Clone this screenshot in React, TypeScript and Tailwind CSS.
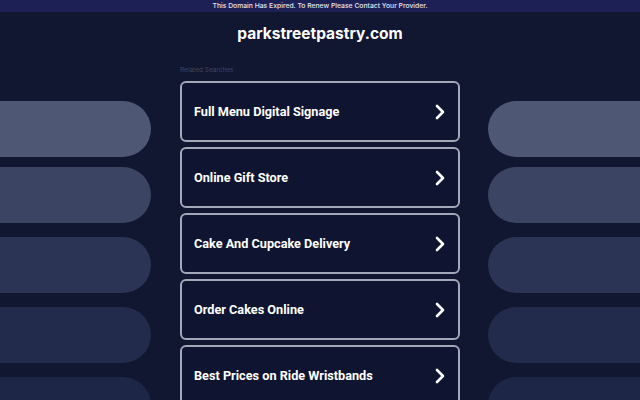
import React from "react";

const items = [
  "Full Menu Digital Signage",
  "Online Gift Store",
  "Cake And Cupcake Delivery",
  "Order Cakes Online",
  "Best Prices on Ride Wristbands",
];

const pills = [
  { c: "bg-[#4e5875]", mt: "mt-0", h: "h-[56px]" },
  { c: "bg-[#3b4462]", mt: "mt-[10px]", h: "h-[56px]" },
  { c: "bg-[#2c3455]", mt: "mt-[14px]", h: "h-[56px]" },
  { c: "bg-[#232b4c]", mt: "mt-[14px]", h: "h-[56px]" },
  { c: "bg-[#1e2647]", mt: "mt-[14px]", h: "h-[56px]" },
];

function Chevron() {
  return (
    <svg width="12" height="16" viewBox="0 0 12 16" fill="none">
      <path d="M3 2l6 6-6 6" stroke="white" strokeWidth="2.6" strokeLinecap="round" strokeLinejoin="round" />
    </svg>
  );
}

export default function App() {
  return (
    <div className="w-[640px] h-[400px] overflow-hidden bg-[#111631] flex flex-col" style={{ fontFamily: "Inter, 'Liberation Sans', sans-serif" }}>
      <div className="h-[12px] shrink-0 bg-[#1d2055] flex items-center justify-center text-[6.8px] font-medium text-[#e5e7f0] leading-none">
        This Domain Has Expired. To Renew Please Contact Your Provider.
      </div>
      <div className="mt-[13px] shrink-0 text-center text-white font-bold text-[15.5px] leading-[18px]">
        parkstreetpastry.com
      </div>
      <div className="flex mt-[23px]">
        <div className="w-[180px] shrink-0 flex flex-col pt-[35px]">
          {pills.map((p, i) => (
            <div key={i} className={`w-[151px] ${p.h} ${p.mt} ${p.c} rounded-r-full shrink-0`} />
          ))}
        </div>
        <div className="w-[280px] shrink-0 flex flex-col">
          <div className="text-[6.5px] text-[#3f4763] leading-[8px] h-[15px]">Related Searches</div>
          <div className="flex flex-col gap-[5px]">
            {items.map((t) => (
              <div
                key={t}
                className="h-[61px] shrink-0 border-2 border-[#a3a8b8] rounded-[6px] bg-[#0f1530] flex items-center justify-between pl-[12px] pr-[12px]"
              >
                <span className="text-white font-bold text-[12.7px]" style={{ fontFamily: "Roboto, 'Liberation Sans', Arial, sans-serif" }}>
                  {t}
                </span>
                <Chevron />
              </div>
            ))}
          </div>
        </div>
        <div className="flex-1 flex flex-col pt-[35px] pl-[28px]">
          {pills.map((p, i) => (
            <div key={i} className={`w-[200px] ${p.h} ${p.mt} ${p.c} rounded-l-full shrink-0`} />
          ))}
        </div>
      </div>
    </div>
  );
}
